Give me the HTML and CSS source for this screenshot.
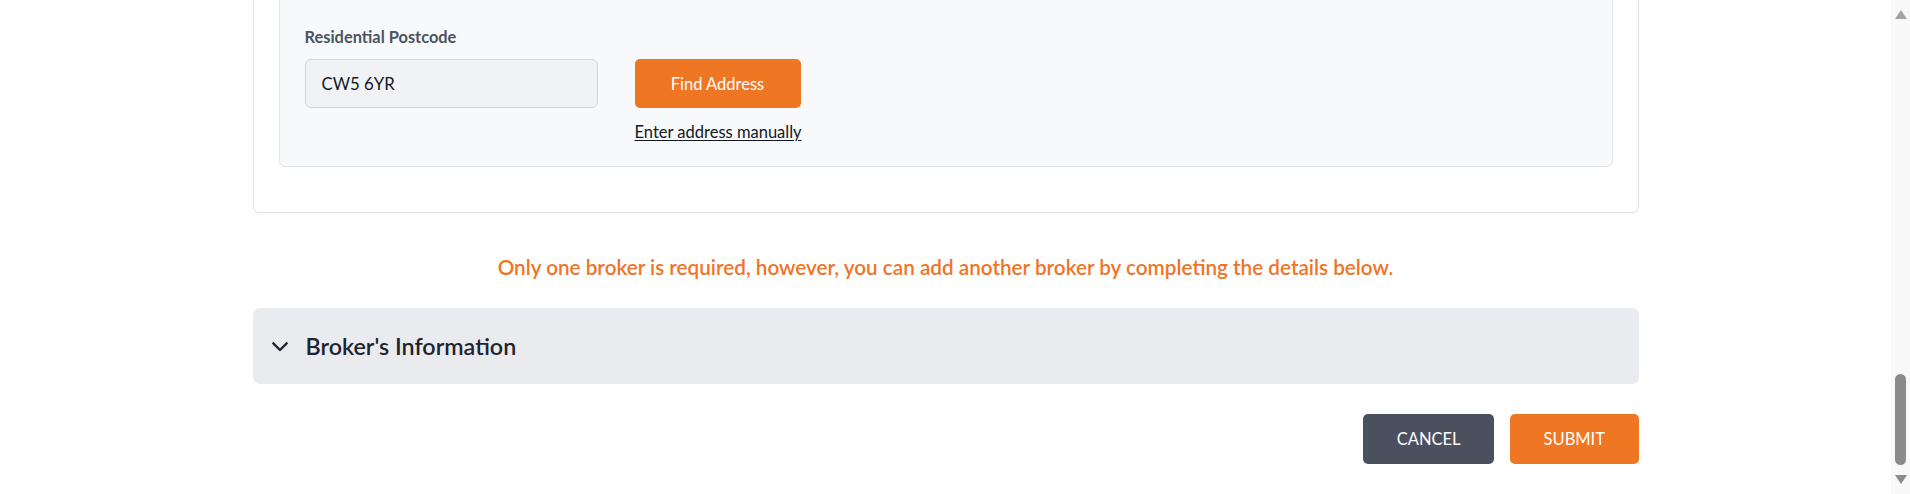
FILE: index.html
```html
<!DOCTYPE html>
<html lang="en">
<head>
<meta charset="utf-8">
<title>Broker Registration</title>
<link rel="stylesheet" href="styles.css">
</head>
<body>
<div class="screen">
  <main class="page">
    <div class="container">
      <section class="card">
        <div class="address-box">
          <div class="postcode-grid">
            <label class="field-label" for="postcode">Residential Postcode</label>
            <span></span>
            <input id="postcode" class="text-input" type="text" value="CW5 6YR">
            <button class="btn btn-orange btn-find" type="button">Find Address</button>
            <span></span>
            <a class="manual-link" href="#">Enter address manually</a>
          </div>
        </div>
      </section>

      <p class="notice">Only one broker is required, however, you can add another broker by completing the details below.</p>

      <div class="accordion">
        <svg class="chevron" width="18" height="11" viewBox="0 0 18 11" aria-hidden="true">
          <path d="M1.6 1.6 L9 9 L16.4 1.6" fill="none" stroke="#1f2430" stroke-width="2.4" stroke-linejoin="round"/>
        </svg>
        <span class="accordion-title">Broker's Information</span>
      </div>

      <div class="actions">
        <button class="btn btn-dark" type="button">CANCEL</button>
        <button class="btn btn-orange" type="button">SUBMIT</button>
      </div>
    </div>
  </main>
  <div class="scrollbar" aria-hidden="true">
    <span class="arrow arrow-up"></span>
    <div class="track"><span class="thumb"></span></div>
    <span class="arrow arrow-down"></span>
  </div>
</div>
</body>
</html>
```
FILE: styles.css
```css
* { box-sizing: border-box; }

html, body {
  margin: 0;
  padding: 0;
  background: #ffffff;
  font-family: Lato, "Noto Sans", sans-serif;
  color: #111827;
}

.screen {
  display: flex;
  height: 494px;
  overflow: hidden;
}

.page {
  flex: 1;
  display: flex;
  flex-direction: column;
  justify-content: flex-end;
  padding-bottom: 30px;
  overflow: hidden;
}

.container {
  width: 1386px;
  margin: 0 auto;
}

.card {
  background: #ffffff;
  border: 1px solid #e0e2e6;
  border-radius: 6px;
  padding: 24px 25px 45px 25px;
}

.address-box {
  background: #f8f9fa;
  border: 1px solid #e2e4e8;
  border-radius: 6px;
  padding: 40px 25px 25px 25px;
}

.postcode-grid {
  display: grid;
  grid-template-columns: 293px 166px;
  column-gap: 37px;
  grid-template-rows: 20px 49px 22px;
  row-gap: 11px;
}

.postcode-grid .field-label { margin-top: -1px; }
.postcode-grid .manual-link { margin-top: 2px; }

.field-label {
  font-size: 16.4px;
  font-weight: 700;
  line-height: 20px;
  color: #4b5363;
  white-space: nowrap;
}

.text-input {
  width: 293px;
  height: 49px;
  border: 1px solid #d0d4db;
  border-radius: 6px;
  background: #f1f2f5;
  padding: 0 16px;
  font-family: inherit;
  font-size: 16.8px;
  color: #111827;
}

.btn {
  border: none;
  border-radius: 5px;
  color: #ffffff;
  font-family: inherit;
  font-size: 16.5px;
  cursor: pointer;
}

.btn-orange { background: #ef7623; }
.btn-dark { background: #4a505e; }

.btn-find {
  width: 166px;
  height: 49px;
}

.manual-link {
  font-size: 16.5px;
  line-height: 22px;
  color: #111827;
  text-decoration: underline;
  text-underline-offset: 2px;
  white-space: nowrap;
}

.notice {
  margin: 0;
  padding: 40px 0 27px;
  text-align: center;
  font-size: 20.7px;
  font-weight: 600;
  line-height: 28px;
  color: #f07428;
}

.accordion {
  display: flex;
  align-items: center;
  height: 76px;
  background: #eaebef;
  border-radius: 7px;
  padding: 0 18px;
  gap: 17px;
}

.chevron { flex: none; }

.accordion-title {
  font-size: 23.3px;
  font-weight: 600;
  color: #1f2430;
}

.actions {
  display: flex;
  justify-content: flex-end;
  gap: 16px;
  margin-top: 30px;
}

.actions .btn {
  height: 50px;
  padding: 0 33.5px;
}

.scrollbar {
  width: 19px;
  flex: none;
  background: #f8f8f8;
  display: flex;
  flex-direction: column;
  align-items: center;
}

.track {
  flex: 1;
  display: flex;
  flex-direction: column;
  justify-content: flex-end;
  align-items: center;
  padding: 0 0 10px;
}

.thumb {
  width: 11px;
  height: 91px;
  border-radius: 6px;
  background: #8a8a8a;
}

.arrow {
  width: 0;
  height: 0;
  border-left: 6.5px solid transparent;
  border-right: 6.5px solid transparent;
}

.arrow-up {
  margin-top: 10px;
  margin-bottom: 10px;
  border-bottom: 9px solid #a3a3a3;
}

.arrow-down {
  margin-bottom: 10px;
  border-top: 9px solid #8a8a8a;
}
```
